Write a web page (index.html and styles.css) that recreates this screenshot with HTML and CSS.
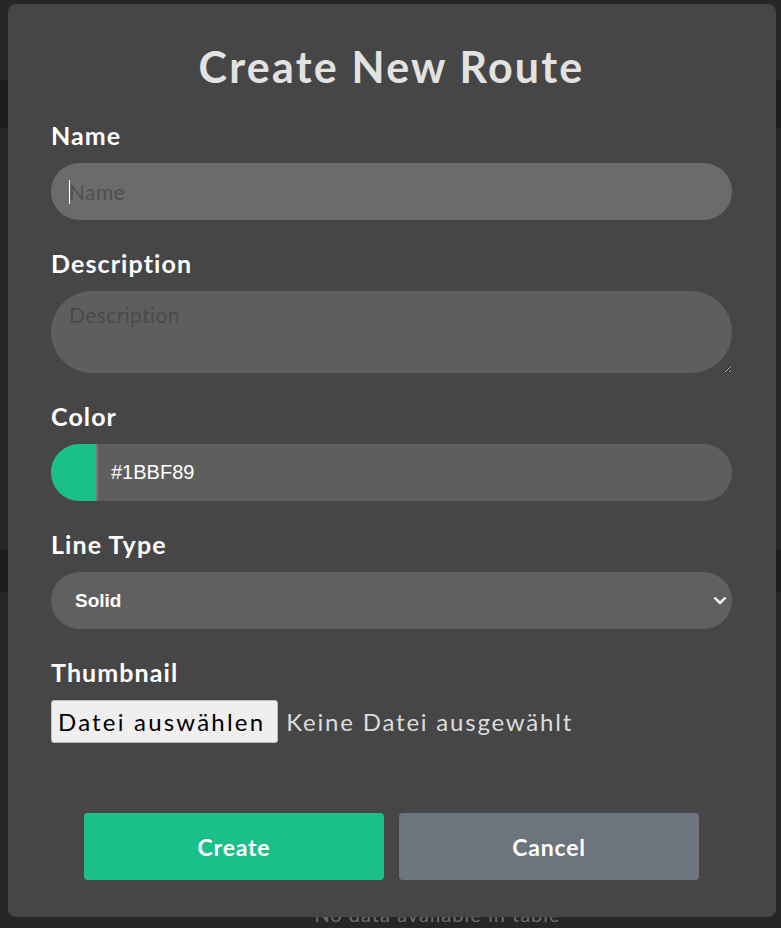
FILE: index.html
```html
<!DOCTYPE html>
<html lang="de">
<head>
<meta charset="utf-8">
<title>Create New Route</title>
<link rel="stylesheet" href="styles.css">
</head>
<body>
<div class="page">
  <div class="page-head"></div>
  <div class="band band-top"></div>
  <div class="page-mid"></div>
  <div class="band band-mid"></div>
  <div class="page-low"></div>
  <p class="empty">No data available in table</p>
</div>

<div class="modal">
  <h1 class="modal-title">Create New Route</h1>
  <form class="form">
    <div class="group">
      <label class="label" for="name">Name</label>
      <div class="input-wrap">
        <input class="field field-name" id="name" type="text" placeholder="Name">
        <span class="caret"></span>
      </div>
    </div>
    <div class="group">
      <label class="label" for="desc">Description</label>
      <textarea class="field field-area" id="desc" placeholder="Description"></textarea>
    </div>
    <div class="group">
      <label class="label" for="color">Color</label>
      <div class="color-row">
        <span class="swatch"></span>
        <input class="color-text" id="color" type="text" value="#1BBF89">
      </div>
    </div>
    <div class="group">
      <label class="label" for="line">Line Type</label>
      <div class="select-wrap">
        <select class="field field-select" id="line">
          <option>Solid</option>
          <option>Dashed</option>
          <option>Dotted</option>
        </select>
        <svg class="chevron" width="14" height="9" viewBox="0 0 14 9"><path d="M1.5 1.5 L7 7 L12.5 1.5" fill="none" stroke="#ffffff" stroke-width="2.4"/></svg>
      </div>
    </div>
    <div class="group group-file">
      <label class="label">Thumbnail</label>
      <div class="file-row">
        <button type="button" class="file-btn">Datei auswählen</button>
        <span class="file-none">Keine Datei ausgewählt</span>
      </div>
    </div>
    <div class="actions">
      <button type="button" class="btn btn-create">Create</button>
      <button type="button" class="btn btn-cancel">Cancel</button>
    </div>
  </form>
</div>
</body>
</html>
```

FILE: styles.css
```css
html, body {
  margin: 0;
  padding: 0;
}

body {
  background: #262626;
  font-family: Lato, "Open Sans", sans-serif;
  height: 928px;
  overflow: hidden;
}

.page {
  display: flex;
  flex-direction: column;
}

.page-head { height: 80px; }
.band { background: #1d1d1d; }
.band-top { height: 48px; }
.page-mid { height: 422px; }
.band-mid { height: 42px; }
.page-low { height: 310px; }

.empty {
  margin: 0;
  text-align: center;
  padding-left: 94px;
  font-size: 20px;
  line-height: 24px;
  letter-spacing: 1px;
  color: #6f6f6f;
}

.modal {
  position: fixed;
  top: 4px;
  left: 8px;
  width: 768px;
  height: 913px;
  box-sizing: border-box;
  background: #464646;
  border-radius: 8px;
  padding: 37px 44px 0 43px;
}

.modal-title {
  margin: 0 0 27px;
  text-align: center;
  font-size: 43px;
  line-height: 52px;
  font-weight: 700;
  color: #e2e2e2;
  letter-spacing: 2.2px;
}

.form {
  display: flex;
  flex-direction: column;
}

.group {
  display: flex;
  flex-direction: column;
  margin-bottom: 28px;
}

.label {
  font-size: 25px;
  line-height: 30px;
  font-weight: 700;
  color: #ffffff;
  letter-spacing: 1.1px;
  margin-bottom: 13px;
}

.input-wrap {
  position: relative;
}

.caret {
  position: absolute;
  left: 18px;
  top: 17px;
  width: 1px;
  height: 24px;
  background: #ffffff;
}

.field {
  box-sizing: border-box;
  width: 100%;
  border: none;
  outline: none;
  color: #ffffff;
  font-family: Lato, "Open Sans", sans-serif;
}

.field::placeholder {
  color: #4f4f4f;
}

.field-name {
  display: block;
  height: 57px;
  border-radius: 29px;
  background: #6b6b6b;
  padding: 0 18px;
  font-size: 21px;
  letter-spacing: 0.4px;
}

.field-area {
  height: 82px;
  border-radius: 41px;
  background: #5e5e5e;
  padding: 11px 18px;
  font-size: 21px;
  line-height: 25px;
  letter-spacing: 0.4px;
  resize: vertical;
  display: block;
}

.field-area::placeholder {
  color: #4a4a4a;
}

.color-row {
  display: flex;
  height: 57px;
  border-radius: 29px;
  overflow: hidden;
  background: #5e5e5e;
}

.swatch {
  width: 45px;
  flex: none;
  background: #1bbf89;
  border-right: 2px solid #777777;
}

.color-text {
  flex: 1;
  min-width: 0;
  border: none;
  outline: none;
  background: transparent;
  color: #ffffff;
  padding: 0 13px;
  font-family: "Liberation Sans", Arial, sans-serif;
  font-size: 20px;
}

.select-wrap {
  position: relative;
}

.field-select {
  appearance: none;
  -webkit-appearance: none;
  height: 57px;
  border-radius: 29px;
  background: #5f5f5f;
  padding: 0 24px;
  font-family: "Liberation Sans", Arial, sans-serif;
  font-size: 19px;
  font-weight: 700;
}

.chevron {
  position: absolute;
  right: 5px;
  top: 24px;
  pointer-events: none;
}

.group-file {
  margin-bottom: 70px;
}

.file-row {
  display: flex;
  align-items: center;
  gap: 8px;
}

.file-btn {
  height: 43px;
  box-sizing: border-box;
  background: #efefef;
  border: 1px solid #bdbdbd;
  border-radius: 3px;
  padding: 0 12px 0 6px;
  font-family: Lato, "Open Sans", sans-serif;
  font-size: 24px;
  letter-spacing: 2.2px;
  color: #000000;
}

.file-none {
  font-size: 24px;
  letter-spacing: 1.8px;
  color: #dcdcdc;
}

.actions {
  display: flex;
  justify-content: center;
  gap: 15px;
}

.btn {
  width: 300px;
  height: 67px;
  border: none;
  border-radius: 4px;
  font-family: Lato, "Open Sans", sans-serif;
  font-size: 23px;
  font-weight: 700;
  letter-spacing: 0.8px;
  color: #ffffff;
}

.btn-create { background: #1bbf89; }
.btn-cancel { background: #6c757d; }
```
